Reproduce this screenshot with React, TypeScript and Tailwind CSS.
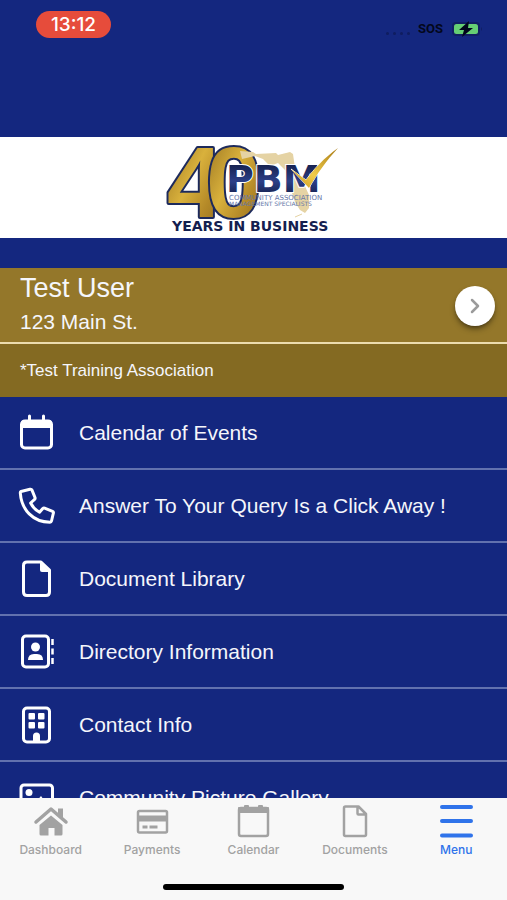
import React from "react";

const stroke = {
  fill: "none",
  stroke: "currentColor",
  strokeLinecap: "round" as const,
  strokeLinejoin: "round" as const,
};

function Logo() {
  return (
    <svg viewBox="166 142 176 93" className="h-[93px] w-44" role="img" aria-label="PBM, 40 years in business">
      <defs>
        <linearGradient id="gold" x1="0" y1="0" x2="1" y2="1">
          <stop offset="0" stopColor="#8f6a1c" />
          <stop offset="0.45" stopColor="#d9b13c" />
          <stop offset="0.7" stopColor="#b58a28" />
          <stop offset="1" stopColor="#8a661c" />
        </linearGradient>
        <linearGradient id="navy" x1="0" y1="0" x2="0" y2="1">
          <stop offset="0" stopColor="#0c1436" />
          <stop offset="0.55" stopColor="#2c4088" />
          <stop offset="1" stopColor="#0c1436" />
        </linearGradient>
        <linearGradient id="check" x1="0" y1="1" x2="1" y2="0">
          <stop offset="0" stopColor="#c8951b" />
          <stop offset="0.4" stopColor="#f0cc4a" />
          <stop offset="1" stopColor="#a87a14" />
        </linearGradient>
      </defs>
      <g
        fill="url(#gold)"
        stroke="#1d2a5c"
        strokeWidth="4"
        paintOrder="stroke"
        strokeLinejoin="round"
        fontFamily="'Liberation Sans', Arial, sans-serif"
        fontWeight="700"
        fontSize="100"
      >
        <text x="167" y="218">4</text>
        <text x="206" y="218">0</text>
      </g>
      <path
        d="M240 152l13 1 3 2 20-1 2 2 12-3 3 2 2 14 8 14 6 13 0 13-4 5-5-3-5-8-3-9-5-10-1-12-8-8-8 3-7-7-8-3-13 3z"
        fill="#e5d3a4"
      />
      <path d="M295 218l7-3" stroke="#e5d3a4" strokeWidth="1" />
      <text
        x="226"
        y="193"
        fill="url(#navy)"
        stroke="#fff"
        strokeWidth="2"
        paintOrder="stroke"
        fontFamily="'DejaVu Sans', sans-serif"
        fontWeight="700"
        fontSize="38"
      >
        PBM
      </text>
      <path
        d="M291 170l15 11c8-11 18-22 32-32-12 13-21 26-29 40z"
        fill="url(#check)"
        stroke="#fff"
        strokeWidth="1"
        paintOrder="stroke"
      />
      <g fill="#6576a8" fontFamily="'DejaVu Sans', sans-serif">
        <text x="229" y="201" fontSize="7">COMMUNITY ASSOCIATION</text>
        <text x="229" y="207" fontSize="6">MANAGEMENT SPECIALISTS</text>
      </g>
      <text x="172" y="232" fill="#14204f" fontFamily="'DejaVu Sans', sans-serif" fontWeight="700" fontSize="14">
        YEARS IN BUSINESS
      </text>
    </svg>
  );
}

function StatusBar() {
  return (
    <div className="flex h-[137px] shrink-0 items-start justify-between pr-6 pl-9">
      <time className="mt-[11px] flex h-[27px] w-[75px] items-center justify-center rounded-full bg-[#e64c3b] font-['Inter',sans-serif] text-[19px] leading-6 font-medium text-white">
        13:12
      </time>
      <div className="mt-[19px] flex items-center gap-2">
        <div className="flex gap-1 pt-2">
          <i className="size-[3px] rounded-full bg-[#0f1d60]" />
          <i className="size-[3px] rounded-full bg-[#0f1d60]" />
          <i className="size-[3px] rounded-full bg-[#0f1d60]" />
          <i className="size-[3px] rounded-full bg-[#0f1d60]" />
        </div>
        <span className="font-['Roboto',sans-serif] text-[13px] leading-5 font-bold text-[#03071c]">SOS</span>
        <svg viewBox="0 0 32 16" className="h-4 w-8" role="img" aria-label="Battery charging">
          <rect x="1" y="1" width="28" height="14" rx="4" fill="#111f63" />
          <rect x="3" y="3" width="24" height="10" rx="2.5" fill="#66cf74" />
          <path d="M30 6q2 2 0 4z" fill="#111f63" />
          <path d="M18 0L8 9h5l-2 7 11-9h-5z" fill="#03071c" />
        </svg>
      </div>
    </div>
  );
}

const icons: Record<string, React.ReactNode> = {
  calendar: (
    <>
      <rect x="3.5" y="7" width="30" height="27" rx="3.5" {...stroke} strokeWidth="3" />
      <path d="M3 14V9q0-3 3-3h25q3 0 3 3v5z" fill="currentColor" />
      <path d="M11.5 6V2M25.500 6V2" {...stroke} strokeWidth="3" />
    </>
  ),
  phone: (
    <path
      d="M3 4.500L12 2.300Q13.500 2 14 3.200L17 10.500Q17.400 11.700 16.600 12.400L12.600 16Q16 22.500 21.500 25.200L24.800 21.500Q25.600 20.700 26.600 21.100L34.500 24.300Q35.700 24.900 35.400 26L33.500 34Q33.200 35.300 32 35.300C15 35 3.500 23 2.300 6Q2.200 4.800 3 4.500Z"
      {...stroke}
      strokeWidth="3"
    />
  ),
  document: (
    <>
      <path d="M23 2H9Q5.500 2 5.500 5.500V32Q5.500 35.500 9 35.500H28Q31.500 35.500 31.500 32V10Z" {...stroke} strokeWidth="3" />
      <path d="M22 2v8q0 2 2 2h8z" fill="currentColor" />
    </>
  ),
  directory: (
    <>
      <rect x="4.500" y="3" width="26" height="31" rx="3.500" {...stroke} strokeWidth="3" />
      <circle cx="17.500" cy="14" r="4.500" fill="currentColor" />
      <path d="M10 27q0-6 6-6h3q6 0 6 6z" fill="currentColor" />
      <path d="M34.500 6v6M34.500 15.500v6M34.500 25v6" {...stroke} strokeLinecap="butt" strokeWidth="2.500" />
    </>
  ),
  building: (
    <>
      <rect x="5.500" y="2" width="26" height="34" rx="3.500" {...stroke} strokeWidth="3" />
      <g fill="currentColor">
        <rect x="10.500" y="7" width="6.500" height="6.500" rx="1" />
        <rect x="20" y="7" width="6.500" height="6.500" rx="1" />
        <rect x="10.500" y="16" width="6.500" height="6.500" rx="1" />
        <rect x="20" y="16" width="6.500" height="6.500" rx="1" />
        <path d="M15 36v-6q0-3.500 3.500-3.500T22 30v6z" />
      </g>
    </>
  ),
  picture: (
    <>
      <rect x="3" y="6" width="31.500" height="27" rx="3" {...stroke} strokeWidth="3" />
      <circle cx="11" cy="13.500" r="3.500" fill="currentColor" />
      <path d="M8 28l6-7 3 3 6-7 8 11z" fill="currentColor" />
    </>
  ),
};

const items = [
  ["calendar", "Calendar of Events"],
  ["phone", "Answer To Your Query Is a Click Away !"],
  ["document", "Document Library"],
  ["directory", "Directory Information"],
  ["building", "Contact Info"],
  ["picture", "Community Picture Gallery"],
];

const tabs: { label: string; icon: React.ReactNode }[] = [
  {
    label: "Dashboard",
    icon: (
      <>
        <path d="M3 18L18 5 33 18" {...stroke} strokeWidth="3.500" />
        <path d="M25 4.500h5v11l-5-4.500zM18 11.500L29.500 21v9q0 1.500-1.500 1.500h-6.500V24h-6v7.500H8Q6.500 31.500 6.500 30v-9z" fill="currentColor" />
      </>
    ),
  },
  {
    label: "Payments",
    icon: (
      <>
        <rect x="4" y="7" width="29" height="21.500" rx="1.500" {...stroke} strokeWidth="2.500" />
        <path d="M4 11.500h29v6H4zM8.500 21.500h5v3h-5zM15.500 21.500h8v3h-8z" fill="currentColor" />
      </>
    ),
  },
  {
    label: "Calendar",
    icon: (
      <>
        <rect x="4" y="4" width="29" height="28" rx="2" {...stroke} strokeWidth="2.500" />
        <path d="M3 9V4q0-1 1-1h5V2q0-1 1-1h3q1 0 1 1v1h9V2q0-1 1-1h3q1 0 1 1v1h5q1 0 1 1v5z" fill="currentColor" />
      </>
    ),
  },
  {
    label: "Documents",
    icon: (
      <path d="M21.500 2.500H8.500Q7 2.500 7 4V30.500Q7 32 8.500 32H27.500Q29 32 29 30.500V10ZM20.500 2.500V9.500Q20.500 10.500 21.500 10.500H29" {...stroke} strokeWidth="2.500" />
    ),
  },
  {
    label: "Menu",
    icon: <path d="M4 3h29M4 17h29M4 31.500h29" {...stroke} strokeWidth="4" />,
  },
];

export default function App() {
  return (
    <div className="flex h-screen flex-col overflow-hidden bg-[#14277f] font-['Liberation_Sans',Arial,sans-serif] text-[#f5f6fb]">
      <StatusBar />
      <header className="mb-[30px] flex shrink-0 justify-center bg-white py-1">
        <Logo />
      </header>
      <section className="flex shrink-0 items-center justify-between border-b-2 border-[#ecdcae] bg-[#94772a] pt-1 pr-3 pb-[2px] pl-5">
        <div>
          <h1 className="text-[27px] leading-8">Test User</h1>
          <p className="text-[21px] leading-9">123 Main St.</p>
        </div>
        <button
          type="button"
          aria-label="Open profile"
          className="flex size-10 items-center justify-center rounded-full bg-white text-[#9b9b9b] shadow-md shadow-black/40"
        >
          <svg viewBox="0 0 16 16" className="size-4">
            <path d="M5 2l6 6-6 6" {...stroke} strokeWidth="2.500" />
          </svg>
        </button>
      </section>
      <p className="flex h-[53px] shrink-0 items-center bg-[#846a22] px-5 text-[17px] leading-6">
        *Test Training Association
      </p>
      <main className="min-h-0 flex-1 overflow-hidden">
        <ul>
          {items.map(([icon, label]) => (
            <li key={label} className="border-b-2 border-[#6271ae]">
              <button type="button" className="flex h-[71px] w-full items-center gap-[23px] pl-[18px] text-left text-[21px] leading-7">
                <svg viewBox="0 0 38 38" className="size-[38px] shrink-0 text-white" aria-hidden="true">
                  {icons[icon]}
                </svg>
                {label}
              </button>
            </li>
          ))}
        </ul>
      </main>
      <nav className="flex shrink-0 flex-col items-center bg-[#f8f8f8] pb-[10px]">
        <div className="grid w-full grid-cols-5 pt-[6px] pb-6">
          {tabs.map(({ label, icon }) => (
            <a
              key={label}
              href={"#" + label.toLowerCase()}
              aria-current={label === "Menu" ? "page" : undefined}
              className="flex flex-col items-center text-[#a2a2a2] aria-[current=page]:text-[#2f73ea]"
            >
              <svg viewBox="0 0 36 36" className="size-9" aria-hidden="true">
                {icon}
              </svg>
              <span className="font-['Inter',sans-serif] text-[12px] leading-5 font-medium">{label}</span>
            </a>
          ))}
        </div>
        <div className="h-[6px] w-[181px] rounded-full bg-black" />
      </nav>
    </div>
  );
}
